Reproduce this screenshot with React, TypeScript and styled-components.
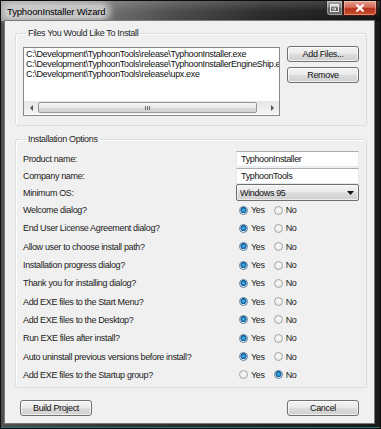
import React from 'react';
import styled, { createGlobalStyle } from 'styled-components';

const GlobalStyle = createGlobalStyle`
  html, body {
    margin: 0;
    padding: 0;
    background: #111;
  }
  body {
    font-family: "Liberation Sans", Arial, sans-serif;
    font-size: 9px;
    letter-spacing: -0.35px;
    color: #1b1b1b;
  }
`;

const Window = styled.div`
  width: 381px;
  height: 429px;
  box-sizing: border-box;
  overflow: hidden;
  border: 1px solid #0c0c0c;
  display: flex;
  flex-direction: column;
  background: linear-gradient(to right, #505050 0%, #353535 30%, #242424 70%, #1a1a1a 100%);
  box-shadow: inset 0 -1px 0 #2f6f74;
`;

const TitleBar = styled.div`
  height: 20px;
  flex-shrink: 0;
  display: flex;
  align-items: flex-start;
  padding-left: 4px;
  background:
    linear-gradient(to bottom, rgba(255, 255, 255, 0.18) 0%, rgba(255, 255, 255, 0.04) 50%, rgba(0, 0, 0, 0) 100%),
    linear-gradient(to right, #9a9a9a 0%, #7a7a7a 22%, #4a4a4a 45%, #262626 70%, #121212 100%);
`;

const Title = styled.span`
  margin-top: 4px;
  padding: 0 2px;
  font-size: 9.5px;
  letter-spacing: -0.15px;
  line-height: 13px;
  color: #000;
  background: rgba(214, 214, 214, 0.8);
  border-radius: 6px;
  box-shadow: 0 0 6px 4px rgba(214, 214, 214, 0.7);
`;

const CaptionButtons = styled.div`
  margin-left: auto;
  margin-right: 3px;
  display: flex;
`;

const CaptionButton = styled.div<{ $close?: boolean }>`
  width: ${({ $close }) => ($close ? '34px' : '17px')};
  height: 15px;
  box-sizing: border-box;
  display: flex;
  align-items: center;
  justify-content: center;
  border: 1px solid ${({ $close }) => ($close ? '#4b1410' : '#2a2a2a')};
  border-top: none;
  border-radius: ${({ $close }) => ($close ? '0 0 4px 0' : '0 0 0 4px')};
  background: ${({ $close }) =>
    $close
      ? 'linear-gradient(to bottom, #e5a08f 0%, #d56b55 45%, #b8321d 55%, #c9502f 100%)'
      : 'linear-gradient(to bottom, #a9a9a9 0%, #7d7d7d 45%, #5d5d5d 55%, #6d6d6d 100%)'};
  box-shadow: inset 0 0 0 1px rgba(255, 255, 255, 0.35);
`;

const Frame = styled.div`
  flex: 1;
  min-height: 0;
  display: flex;
  padding: 0 6px 5px 4px;
`;

const Body = styled.div`
  flex: 1;
  min-width: 0;
  overflow: hidden;
  background: #f0f0f0;
  box-shadow: 0 0 0 1px #7a7a7a;
  padding: 7px 7px 0 10px;
  display: flex;
  flex-direction: column;
`;

const Group = styled.fieldset<{ $top?: number; $bottom: number }>`
  margin: ${({ $top }) => $top ?? 0}px 0 0 0;
  padding: 0 7px ${({ $bottom }) => $bottom}px 7px;
  border: 1px solid #d5dfe5;
  border-radius: 3px;
  min-width: 0;
  box-shadow: inset 1px 1px 0 #fff;
`;

const Legend = styled.legend`
  margin-left: 3px;
  padding: 0 2px;
  line-height: 11px;
  color: #1e1e1e;
`;

const FilesRow = styled.div`
  display: flex;
  gap: 7px;
  padding-top: 8px;
`;

const ListBox = styled.div`
  flex: 1;
  min-width: 0;
  height: 69px;
  box-sizing: border-box;
  border: 1px solid #828790;
  background: #fff;
  display: flex;
  flex-direction: column;
`;

const ListItems = styled.div`
  flex: 1;
  padding: 1px 0 0 2px;
  overflow: hidden;
`;

const ListItem = styled.div`
  white-space: nowrap;
  line-height: 10px;
  color: #111;
`;

const HScroll = styled.div`
  height: 13px;
  margin: 0 0 1px 0;
  display: flex;
  align-items: center;
  background: linear-gradient(to bottom, #e6e6e6, #f4f4f4);
`;

const ScrollArrow = styled.div`
  width: 14px;
  height: 13px;
  display: flex;
  align-items: center;
  justify-content: center;
`;

const Thumb = styled.div`
  flex: 1;
  height: 11px;
  margin-right: 8px;
  box-sizing: border-box;
  border: 1px solid #979797;
  border-radius: 2px;
  background: linear-gradient(to bottom, #f5f5f5 0%, #e9e9e9 50%, #d9d9d9 51%, #d2d2d2 100%);
  display: flex;
  align-items: center;
  justify-content: center;
  gap: 1px;
`;

const Grip = styled.span`
  width: 1px;
  height: 4px;
  background: #6f6f6f;
`;

const ButtonColumn = styled.div`
  width: 72px;
  flex-shrink: 0;
  display: flex;
  flex-direction: column;
  gap: 5px;
  margin-top: -1px;
`;

const Button = styled.button`
  width: 72px;
  height: 16px;
  padding: 0;
  box-sizing: border-box;
  border: 1px solid #707070;
  border-radius: 3px;
  font-family: inherit;
  font-size: 9px;
  letter-spacing: -0.35px;
  color: #111;
  background: linear-gradient(to bottom, #f2f2f2 0%, #ebebeb 45%, #dddddd 50%, #cfcfcf 100%);
  box-shadow: inset 0 0 0 1px rgba(255, 255, 255, 0.7);
`;

const OptionsBody = styled.div`
  padding-top: 5px;
  display: flex;
  flex-direction: column;
`;

const FieldRow = styled.div<{ $height: number }>`
  height: ${({ $height }) => $height}px;
  display: grid;
  grid-template-columns: minmax(0, 1fr) 123px;
  align-items: center;
`;

const Label = styled.span`
  white-space: nowrap;
`;

const TextBox = styled.div`
  height: 16px;
  box-sizing: border-box;
  border: 1px solid #e3e9ef;
  border-top-color: #abadb3;
  background: #fff;
  padding-left: 4px;
  line-height: 14px;
  color: #111;
`;

const Select = styled.div`
  height: 17px;
  box-sizing: border-box;
  border: 1px solid #707070;
  border-radius: 2px;
  background: linear-gradient(to bottom, #f2f2f2 0%, #ebebeb 45%, #dddddd 50%, #cfcfcf 100%);
  box-shadow: inset 0 0 0 1px rgba(255, 255, 255, 0.6);
  display: flex;
  align-items: center;
  justify-content: space-between;
  padding: 0 4px 0 3px;
  color: #111;
`;

const RadioPair = styled.div`
  display: flex;
  gap: 9px;
  padding-left: 3px;
`;

const RadioOption = styled.label`
  display: inline-flex;
  align-items: center;
  gap: 3px;
`;

const RadioDot = styled.span<{ $on: boolean }>`
  width: 9px;
  height: 9px;
  box-sizing: border-box;
  border-radius: 50%;
  border: 1px solid ${({ $on }) => ($on ? '#5b7f9c' : '#a5a5a5')};
  background: ${({ $on }) =>
    $on
      ? 'radial-gradient(circle at 50% 45%, #5cc6f2 0%, #1b7cc0 35%, #0d4f8a 55%, #e8eef3 62%, #f7f7f7 100%)'
      : 'radial-gradient(circle at 50% 40%, #fafafa 0%, #ececec 60%, #dcdcdc 100%)'};
`;

const BottomBar = styled.div`
  display: flex;
  justify-content: space-between;
  margin-top: 12px;
  padding: 0 8px 0 5px;
`;

const files = [
  'C:\\Development\\TyphoonTools\\release\\TyphoonInstaller.exe',
  'C:\\Development\\TyphoonTools\\release\\TyphoonInstallerEngineShip.exe',
  'C:\\Development\\TyphoonTools\\release\\upx.exe',
];

const choices: { label: string; yes: boolean }[] = [
  { label: 'Welcome dialog?', yes: true },
  { label: 'End User License Agreement dialog?', yes: true },
  { label: 'Allow user to choose install path?', yes: true },
  { label: 'Installation progress dialog?', yes: true },
  { label: 'Thank you for installing dialog?', yes: true },
  { label: 'Add EXE files to the Start Menu?', yes: true },
  { label: 'Add EXE files to the Desktop?', yes: true },
  { label: 'Run EXE files after install?', yes: true },
  { label: 'Auto uninstall previous versions before install?', yes: true },
  { label: 'Add EXE files to the Startup group?', yes: false },
];

const Triangle: React.FC<{ dir: 'left' | 'right' | 'down' }> = ({ dir }) => {
  const points =
    dir === 'left' ? '3,0 0,3 3,6' : dir === 'right' ? '0,0 3,3 0,6' : '0,0 7,0 3.5,4';
  const w = dir === 'down' ? 7 : 3;
  const h = dir === 'down' ? 4 : 6;
  return (
    <svg width={w} height={h} viewBox={`0 0 ${w} ${h}`}>
      <polygon points={points} fill={dir === 'down' ? '#111' : '#555'} />
    </svg>
  );
};

const App: React.FC = () => {
  return (
    <>
      <GlobalStyle />
      <Window>
        <TitleBar>
          <Title>TyphoonInstaller Wizard</Title>
          <CaptionButtons>
            <CaptionButton>
              <svg width="9" height="8" viewBox="0 0 9 8">
                <rect x="0.5" y="0.5" width="8" height="7" fill="none" stroke="#e8e8e8" />
                <rect x="1" y="1" width="7" height="1.5" fill="#e8e8e8" />
                <path d="M2 5 H6 M4.5 3.5 L6 5 L4.5 6.5" stroke="#e8e8e8" strokeWidth="1" fill="none" />
              </svg>
            </CaptionButton>
            <CaptionButton $close>
              <svg width="10" height="8" viewBox="0 0 10 8">
                <path d="M1.5 0.5 L8.5 7.5 M8.5 0.5 L1.5 7.5" stroke="#fff" strokeWidth="2.2" />
              </svg>
            </CaptionButton>
          </CaptionButtons>
        </TitleBar>
        <Frame>
          <Body>
            <Group $bottom={9}>
              <Legend>Files You Would Like To Install</Legend>
              <FilesRow>
                <ListBox>
                  <ListItems>
                    {files.map((f) => (
                      <ListItem key={f}>{f}</ListItem>
                    ))}
                  </ListItems>
                  <HScroll>
                    <ScrollArrow>
                      <Triangle dir="left" />
                    </ScrollArrow>
                    <Thumb>
                      <Grip />
                      <Grip />
                      <Grip />
                    </Thumb>
                    <ScrollArrow>
                      <Triangle dir="right" />
                    </ScrollArrow>
                  </HScroll>
                </ListBox>
                <ButtonColumn>
                  <Button>Add Files...</Button>
                  <Button>Remove</Button>
                </ButtonColumn>
              </FilesRow>
            </Group>

            <Group $top={8} $bottom={3}>
              <Legend>Installation Options</Legend>
              <OptionsBody>
                <FieldRow $height={17}>
                  <Label>Product name:</Label>
                  <TextBox>TyphoonInstaller</TextBox>
                </FieldRow>
                <FieldRow $height={17}>
                  <Label>Company name:</Label>
                  <TextBox>TyphoonTools</TextBox>
                </FieldRow>
                <FieldRow $height={17}>
                  <Label>Minimum OS:</Label>
                  <Select>
                    <span>Windows 95</span>
                    <Triangle dir="down" />
                  </Select>
                </FieldRow>
                {choices.map((c) => (
                  <FieldRow key={c.label} $height={18.3}>
                    <Label>{c.label}</Label>
                    <RadioPair>
                      <RadioOption>
                        <RadioDot $on={c.yes} />
                        Yes
                      </RadioOption>
                      <RadioOption>
                        <RadioDot $on={!c.yes} />
                        No
                      </RadioOption>
                    </RadioPair>
                  </FieldRow>
                ))}
              </OptionsBody>
            </Group>

            <BottomBar>
              <Button>Build Project</Button>
              <Button>Cancel</Button>
            </BottomBar>
          </Body>
        </Frame>
      </Window>
    </>
  );
};

export default App;
